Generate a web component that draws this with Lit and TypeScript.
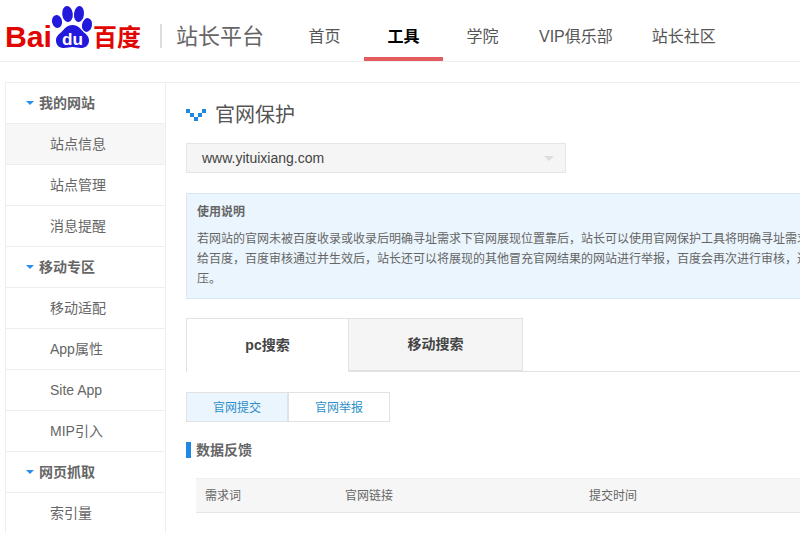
import { LitElement, html, css } from "lit";
import { customElement } from "lit/decorators.js";

const SIDE: [string, boolean, boolean?][] = [
  ["我的网站", true],
  ["站点信息", false, true],
  ["站点管理", false],
  ["消息提醒", false],
  ["移动专区", true],
  ["移动适配", false],
  ["App属性", false],
  ["Site App", false],
  ["MIP引入", false],
  ["网页抓取", true],
  ["索引量", false],
];

@customElement("app-root")
export class AppRoot extends LitElement {
  static styles = css`
    :host {
      display: block;
      width: 100%;
      height: 100vh;
      overflow: hidden;
      background: #fff;
      font-family: "Liberation Sans", "Noto Sans CJK SC", sans-serif;
      color: #666;
    }
    .header {
      display: flex;
      align-items: stretch;
      height: 61px;
      border-bottom: 1px solid #eee;
    }
    .logo { display: block; flex: none; }
    .brand-red { fill: #e10601; font-weight: 700; font-family: "Liberation Sans", "Noto Sans CJK SC", sans-serif; }
    .paw { fill: #2319dc; }
    .du { fill: #fff; font-weight: 700; font-family: "Liberation Sans", sans-serif; }
    .sep { width: 2px; height: 24px; background: #ddd; align-self: center; margin: 11px 0 0 15px; }
    .site {
      font-size: 22px; color: #666; margin: 7px 21px 0 14px; align-self: center; width: 88px; white-space: nowrap;
    }
    .nav { display: flex; }
    .nav a {
      box-sizing: border-box; min-width: 79px; text-align: center; font-size: 16px; color: #555;
      line-height: 74px; height: 61px; white-space: nowrap;
    }
    .nav a.on { color: #000; font-weight: 700; border-bottom: 4px solid #e25c60; }
    .nav a.vip { padding: 0 19px 0 17px; }
    .nav a.last { padding: 0 20px; }
    .body {
      display: flex; margin: 20px 0 0 5px; border-top: 1px solid #eee; height: 451px;
    }
    .side {
      flex: none; width: 161px; box-sizing: border-box;
      border-left: 1px solid #eee; border-right: 1px solid #eee;
    }
    .row {
      box-sizing: border-box; height: 41px; line-height: 40px; border-bottom: 1px solid #eee;
      font-size: 14px; color: #666; padding-left: 44px; white-space: nowrap;
    }
    .row.head { display: flex; align-items: center; gap: 5px; padding-left: 20px; font-weight: 700; }
    .row.active { background: #f7f7f7; }
    .tri { width: 0; height: 0; border: 4px solid transparent; border-top: 4px solid #2a8fe8; border-bottom: 0; }
    .main { flex: 1; min-width: 0; overflow: hidden; padding: 19px 0 0 20px; }
    .title { display: flex; align-items: center; gap: 9px; height: 22px; font-size: 20px; color: #555; white-space: nowrap; }
    .title svg { margin-top: 4px; }
    .select {
      display: flex; align-items: center; justify-content: space-between; box-sizing: border-box;
      width: 380px; height: 30px; margin-top: 19px; padding: 0 11px 0 15px;
      background: #f5f5f5; border: 1px solid #e5e5e5; font-size: 14px; color: #444;
    }
    .arrow { width: 0; height: 0; border: 5px solid transparent; border-top: 5px solid #ddd; border-bottom: 0; }
    .notice {
      box-sizing: border-box; width: 800px; height: 106px; margin-top: 20px; padding: 8px 10px;
      background: #ebf5fd; border: 1px solid #d6e6f2; font-size: 12px; color: #666; line-height: 20px;
    }
    .notice b { display: block; margin-bottom: 7px; }
    .notice div { white-space: nowrap; }
    .tabs { display: flex; margin-top: 19px; height: 54px; border-bottom: 1px solid #e2e2e2; box-sizing: border-box; }
    .tab {
      box-sizing: border-box; height: 54px; padding-bottom: 4px; font-size: 14px; font-weight: 700; color: #444;
      display: flex; align-items: center; justify-content: center;
      border: 1px solid #e2e2e2; background: #f5f5f5;
    }
    .tab.first { width: 162px; background: #fff; border-bottom: 0; border-right: 0; }
    .tab.second { width: 175px; height: 53px; }
    .subs { display: flex; margin-top: 20px; }
    .sub {
      box-sizing: border-box; width: 102px; height: 30px; line-height: 30px; text-align: center; font-size: 12px;
      color: #2b8fc9; border: 1px solid #e2e2e2; background: #fff;
    }
    .sub.on { background: #ebf5fd; }
    .h2 { display: flex; align-items: center; gap: 5px; margin-top: 20px; height: 16px; font-size: 14px; font-weight: 700; color: #666; }
    .h2 i { width: 5px; height: 16px; background: #1e88e5; }
    .h2 span { margin-top: -2px; }
    .thead {
      box-sizing: border-box; display: grid; grid-template-columns: 140px 244px 1fr; width: 800px; height: 35px;
      margin: 20px 0 0 10px; padding-left: 9px; line-height: 34px; font-size: 12px; color: #666;
      background: #f6f6f6; border-top: 1px solid #eee; border-bottom: 1px solid #e5e5e5;
    }
  `;

  render() {
    return html`
      <div class="header">
        <svg class="logo" width="145" height="61" viewBox="0 0 145 61">
          <text class="brand-red" x="5" y="47" font-size="30" textLength="47" lengthAdjust="spacingAndGlyphs">Bai</text>
          <g class="paw">
            <ellipse cx="57" cy="21.500" rx="5" ry="6.500" transform="rotate(-12 57 21.500)" />
            <ellipse cx="67.500" cy="14" rx="5.300" ry="8" transform="rotate(-6 67.500 14)" />
            <ellipse cx="79" cy="14" rx="5" ry="8" transform="rotate(6 79 14)" />
            <ellipse cx="87" cy="25" rx="5" ry="7" transform="rotate(12 87 25)" />
            <path d="M72.500 25c6 0 8 4 11 7 3 2.500 5.500 4.500 5.500 8.500 0 5-4 7.500-8 7.500-3.500 0-5.500-1-8.500-1s-5 1-8.500 1c-4.500 0-8-2.500-8-7.500 0-4 2.500-6 5.500-8.500 3-3 5-7 11-7z" />
          </g>
          <text class="du" x="62" y="45" font-size="16" textLength="21" lengthAdjust="spacingAndGlyphs">du</text>
          <text class="brand-red" x="93" y="46" font-size="24">百度</text>
        </svg>
        <div class="sep"></div>
        <div class="site">站长平台</div>
        <nav class="nav">
          <a>首页</a>
          <a class="on">工具</a>
          <a>学院</a>
          <a class="vip">VIP俱乐部</a>
          <a class="last">站长社区</a>
        </nav>
      </div>
      <div class="body">
        <aside class="side">
          ${SIDE.map(
            ([t, head, active]) => html`
              <div class="row ${head ? "head" : ""} ${active ? "active" : ""}">
                ${head ? html`<span class="tri"></span>` : ""}<span>${t}</span>
              </div>
            `
          )}
        </aside>
        <main class="main">
          <div class="title">
            <svg width="20" height="12" viewBox="0 0 20 12" fill="#1e88e5">
              <rect x="0" y="0" width="4" height="4" />
              <rect x="4" y="4" width="4" height="4" />
              <rect x="8" y="8" width="4" height="4" />
              <rect x="12" y="4" width="4" height="4" />
              <rect x="16" y="0" width="4" height="4" />
            </svg>
            <span>官网保护</span>
          </div>
          <div class="select"><span>www.yituixiang.com</span><span class="arrow"></span></div>
          <section class="notice">
            <b>使用说明</b>
            <div>若网站的官网未被百度收录或收录后明确寻址需求下官网展现位置靠后，站长可以使用官网保护工具将明确寻址需求提交</div>
            <div>给百度，百度审核通过并生效后，站长还可以将展现的其他冒充官网结果的网站进行举报，百度会再次进行审核，通过后进行打</div>
            <div>压。</div>
          </section>
          <div class="tabs">
            <div class="tab first">pc搜索</div>
            <div class="tab second">移动搜索</div>
          </div>
          <div class="subs">
            <div class="sub on">官网提交</div>
            <div class="sub">官网举报</div>
          </div>
          <div class="h2"><i></i><span>数据反馈</span></div>
          <div class="thead"><span>需求词</span><span>官网链接</span><span>提交时间</span></div>
        </main>
      </div>
    `;
  }
}
